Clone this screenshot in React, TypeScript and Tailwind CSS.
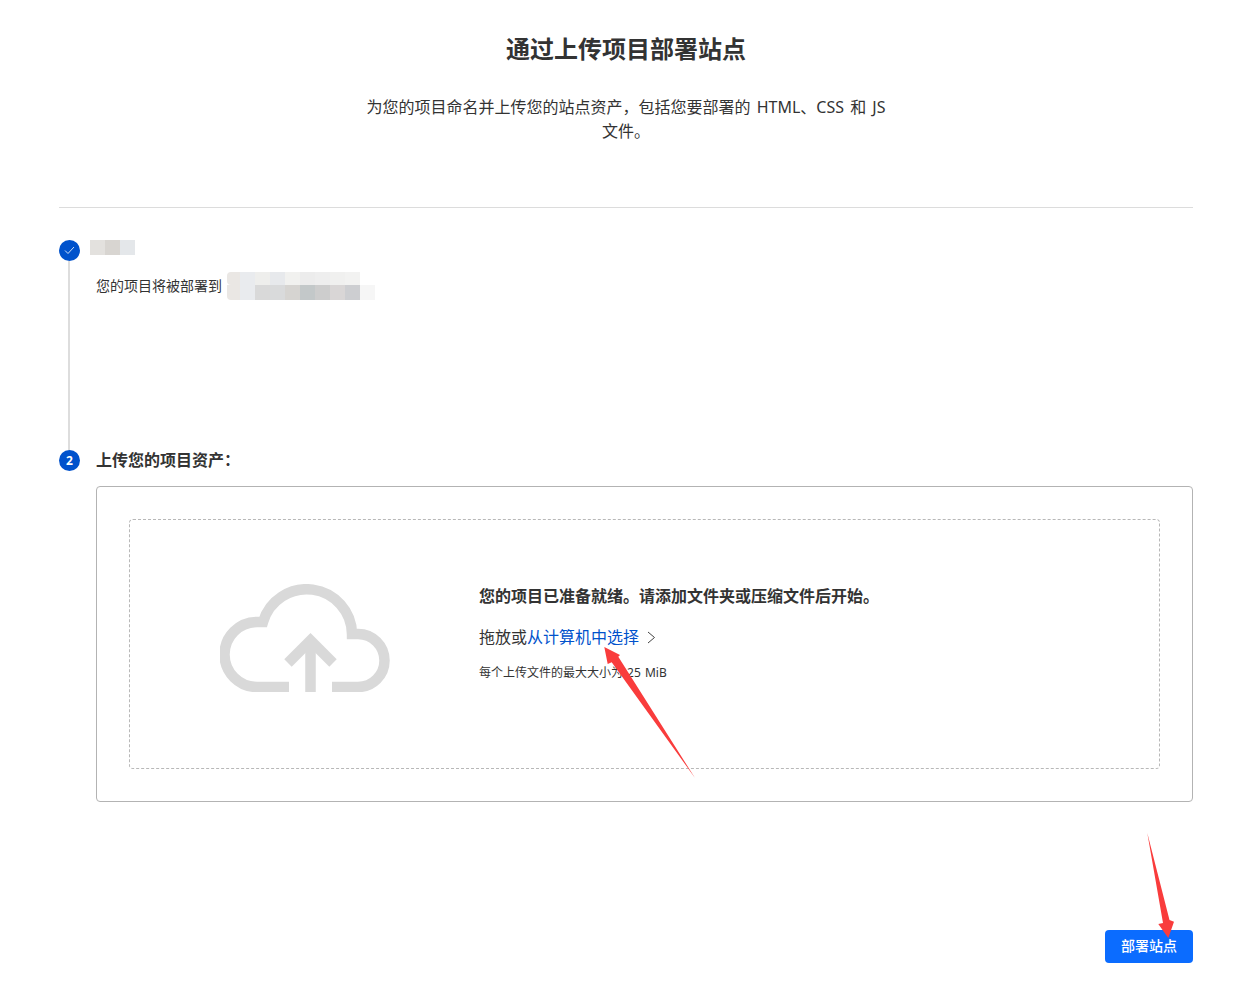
import React from 'react';

const font = { fontFamily: '"Noto Sans", "Noto Sans CJK SC", sans-serif' };

const nameCells = ['bg-[#e3e1de]', 'bg-[#d8d5d1]', 'bg-[#e4e7ea]'];
const urlTop = ['bg-[#e9ebee]', 'bg-[#eeeeec]', 'bg-[#e7e9ec]', 'bg-[#f1f1ef]', 'bg-[#ececec]', 'bg-[#eeeeee]', 'bg-[#f0f0ef]', 'bg-[#f2f2f1]'];
const urlBottom = ['bg-[#e9ebee]', 'bg-[#d9d9d9]', 'bg-[#d9dadb]', 'bg-[#d6d4d1]', 'bg-[#c3c8c9]', 'bg-[#cdcdcd]', 'bg-[#d9d6d6]', 'bg-[#cdced1]', 'bg-[#f6f6f6]'];

const App: React.FC = () => {
  return (
    <div className="relative h-[985px] w-[1242px] overflow-hidden bg-white text-[#333333]" style={font}>
      <div className="flex flex-col px-[49px] pl-[59px]">
        <div className="pt-[33px] text-center">
          <h1 className="text-2xl leading-8 font-bold">通过上传项目部署站点</h1>
          <p className="mx-auto mt-[30px] w-[530px] text-base leading-6 [word-spacing:2px]">
            为您的项目命名并上传您的站点资产，包括您要部署的 HTML、CSS 和 JS 文件。
          </p>
        </div>

        <div className="mt-[64px] h-px bg-[#dcdcdc]" />

        {/* step 1 */}
        <div className="mt-8 flex h-[210px]">
          <div className="flex w-[37px] flex-col">
            <div className="flex h-[21px] w-[21px] items-center justify-center rounded-full bg-[#0052cc]">
              <svg width="11" height="9" viewBox="0 0 11 9" fill="none" stroke="#cfe0f7" strokeWidth="1">
                <path d="M1 4.5 L4 7.5 L10 1" />
              </svg>
            </div>
            <div className="ml-[9px] w-[2px] flex-1 bg-[#dddddd]" />
          </div>
          <div className="flex flex-col">
            <div className="-ml-[6px] flex h-[15px]">
              {nameCells.map((c) => (
                <div key={c} className={`h-[15px] w-[15px] ${c}`} />
              ))}
            </div>
            <div className="mt-[17px] flex items-center">
              <span className="text-sm leading-6">您的项目将被部署到</span>
              <div className="ml-[5px] flex flex-col">
                <div className="flex h-[13px]">
                  <div className="h-[13px] w-[13px] rounded-l bg-[#eae7e4]" />
                  {urlTop.map((c, i) => (
                    <div key={i} className={`h-[13px] w-[15px] ${c}`} />
                  ))}
                </div>
                <div className="flex h-[15px]">
                  <div className="h-[15px] w-[13px] rounded-bl bg-[#eae7e4]" />
                  {urlBottom.map((c, i) => (
                    <div key={i} className={`h-[15px] w-[15px] ${c}`} />
                  ))}
                </div>
              </div>
            </div>
          </div>
        </div>

        {/* step 2 */}
        <div className="flex">
          <div className="w-[37px]">
            <div className="flex h-[21px] w-[21px] items-center justify-center rounded-full bg-[#0052cc] text-xs font-bold text-white">
              2
            </div>
          </div>
          <div className="-mt-px flex h-[21px] items-center text-base font-bold">上传您的项目资产：</div>
        </div>

        <div className="mt-[15px] ml-[37px] rounded border border-[#b3b3b3] p-8">
          <div className="flex h-[250px] items-center rounded border border-dashed border-[#b8b8b8] pl-[90px]">
            <svg className="mb-[12px]" width="170" height="108" viewBox="220 584 170 108" fill="none" stroke="#d9d9d9" strokeWidth="10.5">
              <path d="M289 687 H257 A32.5 32.5 0 0 1 257 622 H263 A45.4 45.4 0 0 1 352 634 H358 A26.5 26.5 0 0 1 358 687 H332" />
              <path d="M310.5 692 V642" />
              <path d="M288 663 L310.5 640.5 L333 663" />
            </svg>
            <div className="mb-[19px] ml-[89px] flex flex-col">
              <div className="text-base leading-6 font-bold">您的项目已准备就绪。请添加文件夹或压缩文件后开始。</div>
              <div className="mt-[17px] flex items-center text-base leading-6">
                <span>拖放或</span>
                <span className="text-[#0052cc]">从计算机中选择</span>
                <svg className="ml-2" width="9" height="13" viewBox="0 0 9 13" fill="none" stroke="#444444" strokeWidth="1">
                  <path d="M1 1 L7.5 6.5 L1 12" />
                </svg>
              </div>
              <div className="mt-[12px] text-xs leading-6 [word-spacing:1px]">每个上传文件的最大大小为 25 MiB</div>
            </div>
          </div>
        </div>

        <div className="mt-[128px] flex justify-end">
          <button className="flex h-[33px] w-[88px] items-center justify-center rounded bg-[#0b6cff] pb-0.5 text-sm font-medium text-white">
            部署站点
          </button>
        </div>
      </div>

      {/* red annotation arrows */}
      <svg className="pointer-events-none absolute top-0 left-0" width="1242" height="985" viewBox="0 0 1242 985" fill="#f93c3c">
        <path d="M604.3 647 L620 655 L618.3 656.7 L695 778 L611.7 662.3 L607.7 664 Z" />
        <path d="M1147.3 833 L1169.5 920 L1174 921.7 L1168.3 938 L1158.3 924 L1163 923 Z" />
      </svg>
    </div>
  );
};

export default App;
